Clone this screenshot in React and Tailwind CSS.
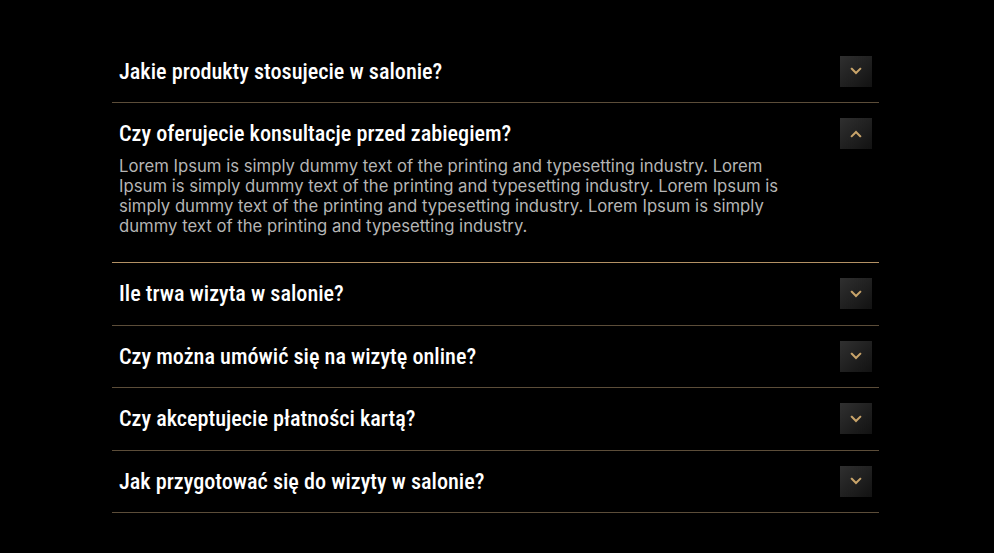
import { useState } from 'react';

const faqs = [
  { q: 'Jakie produkty stosujecie w salonie?' },
  { q: 'Czy oferujecie konsultacje przed zabiegiem?' },
  { q: 'Ile trwa wizyta w salonie?' },
  { q: 'Czy można umówić się na wizytę online?' },
  { q: 'Czy akceptujecie płatności kartą?' },
  { q: 'Jak przygotować się do wizyty w salonie?' },
];

const answer =
  'Lorem Ipsum is simply dummy text of the printing and typesetting industry. Lorem Ipsum is simply dummy text of the printing and typesetting industry. Lorem Ipsum is simply dummy text of the printing and typesetting industry. Lorem Ipsum is simply dummy text of the printing and typesetting industry.';

function Chevron({ open }) {
  return (
    <svg width="12" height="8" viewBox="0 0 12 8" fill="none" className={open ? 'rotate-180' : ''}>
      <path d="M1.8 1.8L6 6L10.2 1.8" stroke="#c9a46a" strokeWidth="2" strokeLinecap="square" />
    </svg>
  );
}

export default function App() {
  const [open, setOpen] = useState(1);

  return (
    <div className="min-h-[553px] bg-black pt-[40.5px]">
      <div className="ml-[112px] w-[767px]">
        {faqs.map((f, idx) => {
          const isOpen = open === idx;
          return (
            <div
              key={idx}
              className={`border-b ${isOpen ? 'border-[#b39164]' : 'border-[#5c4d39]'}`}
            >
              <button
                className="flex w-full items-center justify-between pl-[7px] pr-[7px] h-[61.5px] text-left"
                onClick={() => setOpen(isOpen ? -1 : idx)}
              >
                <span className="font-['Roboto',sans-serif] font-stretch-condensed text-[22.2px] font-medium text-white">
                  {f.q}
                </span>
                <span className="flex h-[31px] w-[32px] items-center justify-center bg-gradient-to-br from-[#303030] to-[#121212]">
                  <Chevron open={isOpen} />
                </span>
              </button>
              {isOpen && (
                <p className="-mt-[8.5px] mb-[26px] max-w-[690px] pl-[7px] font-['Inter',sans-serif] text-[16.7px] leading-[20px] text-[#b5b5b5]">
                  {answer}
                </p>
              )}
            </div>
          );
        })}
      </div>
    </div>
  );
}
